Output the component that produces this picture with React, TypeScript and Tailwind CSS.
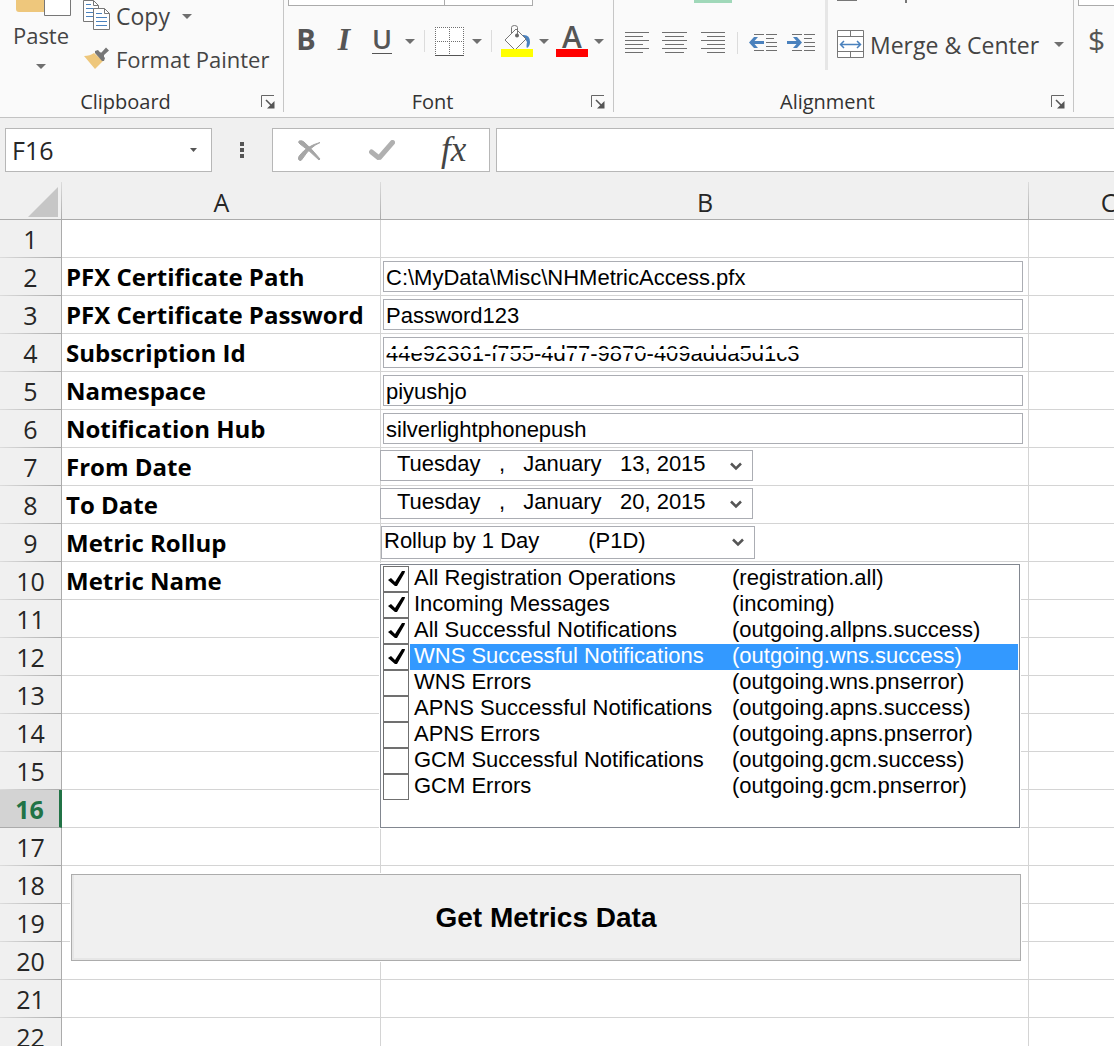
import { useState, type ReactNode } from "react";

const ui = "font-['Open_Sans',sans-serif]";
const form = "font-['Liberation_Sans',sans-serif]";

function Caret() {
  return (
    <svg width="10" height="5" viewBox="0 0 10 5" className="shrink-0" aria-hidden="true">
      <path d="M0 0h10L5 5z" fill="#6f6f6f" />
    </svg>
  );
}

function Launcher() {
  return (
    <button aria-label="More options" className="block">
      <svg width="14" height="14" viewBox="0 0 14 14" aria-hidden="true">
        <path d="M.5 12V.5H13" fill="none" stroke="#666" />
        <path d="M5 5l7 7" stroke="#555" strokeWidth="1.6" />
        <path d="M13.5 6v7.5H6z" fill="#555" />
      </svg>
    </button>
  );
}

function GroupFooter({ name }: { name: string }) {
  return (
    <div className="flex h-5 items-center pr-2">
      <span className="flex-1 pr-2.5 text-center text-[20px] leading-7 text-[#333]">{name}</span>
      <Launcher />
    </div>
  );
}

function Lines({ rows }: { rows: [number, number][] }) {
  return (
    <svg width="25" height="22" viewBox="0 0 25 22" aria-hidden="true">
      {rows.map(([a, b], i) => (
        <path key={i} d={`M${a} ${i * 4 + 0.5}H${b}`} stroke="#6f6f6f" />
      ))}
    </svg>
  );
}

function Indent({ out }: { out?: boolean }) {
  return (
    <svg width="28" height="18" viewBox="0 0 28 18" aria-hidden="true">
      <path d="M5 .5h10M17 .5h11M17 4.5h8M17 8.5h11M17 12.5h11M5 16.5h10M17 16.5h11" stroke="#6f6f6f" />
      <path
        d={out ? "M0 8.5L5 3h4L5.500 7H15v3H5.500L9 14H5z" : "M15 8.500L10 3H6l3.500 4H0v3h9.500L6 14h4z"}
        fill="#4a81bd"
      />
    </svg>
  );
}

function Ribbon() {
  return (
    <header className={`flex h-[118px] shrink-0 overflow-hidden border-b border-[#c3c3c3] bg-[#fafafa] text-[22px] text-[#444] ${ui}`}>
      <section className="mb-[5px] flex w-[284px] shrink-0 flex-col border-r border-[#c6c6c6]">
        <div className="flex flex-1">
          <button aria-label="Paste" className="flex w-[82px] flex-col items-center">
            <svg width="56" height="16" viewBox="0 0 56 16" className="ml-1" aria-hidden="true">
              <path d="M1 0h28v12H4q-3 0-3-3z" fill="#eec77c" />
              <path d="M29.500 0v15.500h26V0" fill="#fff" stroke="#777" />
            </svg>
            <span className="mt-[3px] leading-8">Paste</span>
            <span className="mt-[13px]"><Caret /></span>
          </button>
          <div className="flex flex-col">
            <button className="flex h-8 items-center">
              <svg width="28" height="30" viewBox="0 0 28 30" className="mr-1.5 -mt-0.5" aria-hidden="true">
                <path d="M1.500.5h10l5 5v16h-15z" fill="#fff" stroke="#777" />
                <path d="M11.500.5v5h5" fill="none" stroke="#777" />
                <path d="M4 4.500h5M4 8.500h8M4 12.500h8M4 16.500h8" stroke="#4a81bd" />
                <path d="M11.500 8.500h11l5 5v16h-16z" fill="#fff" stroke="#777" />
                <path d="M22.500 8.500v5h5" fill="none" stroke="#777" />
                <path d="M14 13.500h6M14 17.500h11M14 21.500h11M14 25.500h11" stroke="#4a81bd" />
              </svg>
              <span className="mr-3 text-[23px]">Copy</span>
              <Caret />
            </button>
            <button className="mt-[7px] flex h-10 items-center">
              <svg width="25" height="22" viewBox="0 0 25 22" className="ml-0.5 mr-[7px] -mt-0.5" aria-hidden="true">
                <path d="M0 9q6 0 10-3l9 8-8 8z" fill="#eec77c" />
                <path d="M11 4l3-1 7 8-1 3-2 0-7-8z" fill="#777" />
                <path d="M15 5.500l2.500 0L22 .5l3 3-5 4.500v3l-1 1z" fill="#777" />
              </svg>
              <span>Format Painter</span>
            </button>
          </div>
        </div>
        <GroupFooter name="Clipboard" />
      </section>

      <section className="mb-[5px] flex w-[330px] shrink-0 flex-col border-r border-[#c6c6c6]">
        <div className="ml-1 flex h-1.5 w-[245px] border border-t-0 border-[#ababab] bg-white">
          <div className="w-[156px] border-r border-[#ababab]" />
        </div>
        <div className="mt-[17px] flex h-9 items-center">
          <button className="ml-3 w-5 pb-1 text-center text-[29px] font-bold leading-8 text-[#555]">B</button>
          <button className="ml-4 w-6 pb-1 text-center font-['Liberation_Serif',serif] text-[32px] font-bold italic leading-8 text-[#555]">I</button>
          <button className="ml-4 w-5 pb-1 text-center text-[27px] font-semibold leading-7 text-[#555]">
            <span className="block border-b border-[#555]">U</span>
          </button>
          <span className="ml-[13px]"><Caret /></span>
          <i className="ml-[9px] h-[22px] w-px bg-[#dcdcdc]" />
          <button aria-label="Borders" className="ml-[10px]">
            <svg width="29" height="29" viewBox="0 0 29 29" aria-hidden="true">
              <path d="M0 0h29v29H0z" fill="#fff" />
              <path d="M0 .5h29M0 14.500h29M.5 0v29M14.500 0v29M28.500 0v29" stroke="#6f6f6f" strokeDasharray="1 1" />
              <path d="M0 28.500h29" stroke="#555" />
            </svg>
          </button>
          <span className="ml-2"><Caret /></span>
          <i className="ml-[9px] h-[22px] w-px bg-[#dcdcdc]" />
          <button aria-label="Fill color" className="ml-[9px]">
            <svg width="32" height="32" viewBox="0 0 32 32" aria-hidden="true">
              <path d="M21 10q8-1 8 7 0 4-3 6-1-1 0-6-2-4-5-7z" fill="#4a81bd" />
              <path d="M15 4l10 10-11 11L4 15z" fill="#fff" stroke="#777" />
              <path d="M10.500 9V2.500q0-2 3-2t3 2V10" fill="none" stroke="#777" />
              <circle cx="16" cy="10.500" r="2" fill="#666" />
              <path d="M0 24h32v8H0z" fill="#ff0" />
            </svg>
          </button>
          <span className="ml-1.5"><Caret /></span>
          <button aria-label="Font color" className="ml-[7px] flex w-8 flex-col items-center">
            <span className="-my-1 text-[30px] font-semibold leading-8 text-[#555]">A</span>
            <span className="relative h-2 w-8 bg-[#f00]" />
          </button>
          <span className="ml-1.5"><Caret /></span>
        </div>
        <div className="flex-1" />
        <GroupFooter name="Font" />
      </section>

      <section className="mb-[5px] flex w-[460px] shrink-0 flex-col border-r border-[#c6c6c6]">
        <div className="flex h-[70px]">
          <div className="flex w-[214px] flex-col border-r-[3px] border-[#e6e6e6]">
            <i className="ml-20 h-[3px] w-[38px] bg-[#a0d8b9]" />
            <div className="mt-[22px] flex h-9 items-center">
              <button aria-label="Align left" className="ml-[11px]">
                <Lines rows={[[0, 24], [0, 18], [0, 24], [0, 18], [0, 24], [0, 18]]} />
              </button>
              <button aria-label="Center" className="ml-3">
                <Lines rows={[[0, 25], [3, 22], [0, 25], [3, 22], [0, 25], [3, 22]]} />
              </button>
              <button aria-label="Align right" className="ml-[14px]">
                <Lines rows={[[0, 24], [6, 24], [0, 24], [6, 24], [0, 24], [6, 24]]} />
              </button>
              <i className="ml-[11px] h-[22px] w-px bg-[#dcdcdc]" />
              <button aria-label="Decrease indent" className="ml-[11px]"><Indent out /></button>
              <button aria-label="Increase indent" className="ml-[10px]"><Indent /></button>
            </div>
          </div>
          <div className="flex flex-1 flex-col">
            <div className="flex h-[3px] items-start">
              <i className="ml-[9px] h-px w-5 bg-[#777]" />
              <i className="ml-12 h-[3px] w-0.5 bg-[#777]" />
            </div>
            <button className="mt-[23px] flex h-9 items-center whitespace-nowrap pl-[9px]">
              <svg width="27" height="28" viewBox="0 0 27 28" className="mr-1.5 shrink-0" aria-hidden="true">
                <path d="M.5.5h26v27H.5zM.5 6.500h26M.5 21.500h26M13.500 0v6.500M13.500 21.500V28" fill="#fff" stroke="#777" />
                <path d="M4 14.500h19M7 11l-3.500 3.500L7 18M20 11l3.500 3.500L20 18" fill="none" stroke="#4a81bd" strokeWidth="1.500" />
              </svg>
              <span className="mr-[15px] pt-0.5 text-[23px]">Merge &amp; Center</span>
              <Caret />
            </button>
          </div>
        </div>
        <div className="flex-1" />
        <GroupFooter name="Alignment" />
      </section>

      <section className="min-w-0 flex-1">
        <div className="ml-1 h-1.5 border-b border-l border-[#ababab] bg-white" />
        <button className="ml-[14px] mt-4 block text-[30px] leading-9 text-[#555]">$</button>
      </section>
    </header>
  );
}

function FormulaBar() {
  return (
    <div className={`flex h-16 shrink-0 items-start bg-[#f0f0f0] pt-[10px] ${ui}`}>
      <div className="ml-[5px] flex h-11 w-[207px] shrink-0 items-center border border-[#b7b7b7] bg-white pr-[14px]">
        <input aria-label="Name Box" defaultValue="F16" className="h-full w-full min-w-0 flex-1 bg-transparent pl-1.5 text-[25px] text-[#262626] outline-none" />
        <svg width="7" height="4" viewBox="0 0 7 4" aria-hidden="true"><path d="M0 0h7L3.500 4z" fill="#555" /></svg>
      </div>
      <svg width="4" height="16" viewBox="0 0 4 16" className="ml-7 mt-[14px] shrink-0" aria-hidden="true">
        <path d="M0 0h4v4H0zM0 6h4v4H0zM0 12h4v4H0z" fill="#555" />
      </svg>
      <div className="ml-7 flex h-11 w-[218px] shrink-0 items-center border border-[#b7b7b7] bg-white">
        <button aria-label="Cancel" className="ml-[25px]">
          <svg width="23" height="21" viewBox="0 0 23 21" aria-hidden="true">
            <path d="M1 1q3-1 5 1 7 6 16 17l-1 1Q12 11 2 4 0 3 1 1z" fill="#a6a6a6" stroke="#a6a6a6" />
            <path d="M22 2.500Q12 7 5 18q-2 4-4 2t1-5Q9 6 22 2.500z" fill="#a6a6a6" stroke="#a6a6a6" />
          </svg>
        </button>
        <button aria-label="Enter" className="ml-12">
          <svg width="26" height="21" viewBox="0 0 26 21" aria-hidden="true">
            <path d="M2.500 12l7.500 6L23.500 2.500" fill="none" stroke="#b0b0b0" strokeWidth="5" strokeLinecap="round" strokeLinejoin="bevel" />
          </svg>
        </button>
        <button aria-label="Insert function" className="ml-[46px] font-['Liberation_Serif',serif] text-[35px] italic leading-9 text-[#444]">fx</button>
      </div>
      <input aria-label="Formula" className="ml-1.5 h-11 min-w-0 flex-1 border border-r-0 border-[#b7b7b7] bg-white px-2 text-[25px] outline-none" />
    </div>
  );
}

function Field({ id, value, struck }: { id: string; value: string; struck?: boolean }) {
  return (
    <div className="relative ml-0.5 mr-[5px] mt-[3px]">
      <input
        id={id}
        defaultValue={value}
        className={`block h-[31px] w-full border border-[#abadb3] bg-white pl-0.5 pt-0.5 text-[22px] leading-7 text-black outline-none ${form}`}
      />
      {struck && <span className="absolute left-0.5 top-3 h-1 w-[420px] bg-white" />}
    </div>
  );
}

function Dropdown({ id, value, kind }: { id: string; value: string; kind: "date" | "list" }) {
  return (
    <div className={kind === "date" ? "relative -ml-px mt-0.5 w-[373px]" : "relative mt-0.5 w-[374px]"}>
      <select
        id={id}
        className={`block w-full appearance-none border border-[#abadb3] bg-white text-[22px] leading-[26px] text-black outline-none ${form} ${
          kind === "date" ? "h-[31px] pb-[3px] pl-4" : "h-[33px] pb-1 pl-0.5"
        }`}
      >
        <option>{value}</option>
      </select>
      <svg width="12" height="9" viewBox="0 0 12 9" className="pointer-events-none absolute right-[11px] top-3" aria-hidden="true">
        <path d="M1 1.500l5 5 5-5" fill="none" stroke="#555" strokeWidth="2.500" />
      </svg>
    </div>
  );
}

const metrics: [string, string][] = [
  ["All Registration Operations", "(registration.all)"],
  ["Incoming Messages", "(incoming)"],
  ["All Successful Notifications", "(outgoing.allpns.success)"],
  ["WNS Successful Notifications", "(outgoing.wns.success)"],
  ["WNS Errors", "(outgoing.wns.pnserror)"],
  ["APNS Successful Notifications", "(outgoing.apns.success)"],
  ["APNS Errors", "(outgoing.apns.pnserror)"],
  ["GCM Successful Notifications", "(outgoing.gcm.success)"],
  ["GCM Errors", "(outgoing.gcm.pnserror)"],
];

function MetricList() {
  const [checked, setChecked] = useState([0, 1, 2, 3]);
  const toggle = (i: number) =>
    setChecked(checked.includes(i) ? checked.filter((c) => c !== i) : [...checked, i]);
  return (
    <div
      role="group"
      aria-label="Metric Name"
      className={`absolute -left-px top-0.5 z-10 h-[264px] w-[640px] border border-[#828790] bg-white py-px pl-0.5 pr-px text-[22px] text-black ring-1 ring-white ${form}`}
    >
      {metrics.map(([name, code], i) => (
        <label key={name} className="flex h-[26px] gap-px">
          <span className="relative block size-[26px] shrink-0">
            <input
              type="checkbox"
              checked={checked.includes(i)}
              onChange={() => toggle(i)}
              className="block size-[26px] appearance-none border border-[#707070] bg-white"
            />
            {checked.includes(i) && (
              <svg width="18" height="16" viewBox="0 0 18 16" className="pointer-events-none absolute left-[5px] top-[5px]" aria-hidden="true">
                <path d="M0 9l3-2 4 4L14 0h3l-.5 2L9 15H7z" fill="#000" />
              </svg>
            )}
          </span>
          <span className={i === 3 ? "flex flex-1 bg-[#3399ff] pl-1 leading-6 text-white" : "flex flex-1 pl-1 leading-6"}>
            <span className="w-[318px] whitespace-nowrap">{name}</span>
            <span>{code}</span>
          </span>
        </label>
      ))}
    </div>
  );
}

type Row = { id: string; label: string; control?: ReactNode };

const rows: Record<number, Row> = {
  2: { id: "path", label: "PFX Certificate Path", control: <Field id="path" value="C:\MyData\Misc\NHMetricAccess.pfx" /> },
  3: { id: "password", label: "PFX Certificate Password", control: <Field id="password" value="Password123" /> },
  4: { id: "subscription", label: "Subscription Id", control: <Field id="subscription" value="44e92361-f755-4d77-9870-409adda5d1c3" struck /> },
  5: { id: "namespace", label: "Namespace", control: <Field id="namespace" value="piyushjo" /> },
  6: { id: "hub", label: "Notification Hub", control: <Field id="hub" value="silverlightphonepush" /> },
  7: { id: "from", label: "From Date", control: <Dropdown id="from" kind="date" value={"Tuesday\u00a0\u00a0\u00a0,\u00a0\u00a0\u00a0January\u00a0\u00a0\u00a013, 2015"} /> },
  8: { id: "to", label: "To Date", control: <Dropdown id="to" kind="date" value={"Tuesday\u00a0\u00a0\u00a0,\u00a0\u00a0\u00a0January\u00a0\u00a0\u00a020, 2015"} /> },
  9: { id: "rollup", label: "Metric Rollup", control: <Dropdown id="rollup" kind="list" value={"Rollup by 1 Day\u00a0\u00a0\u00a0\u00a0\u00a0\u00a0\u00a0\u00a0(P1D)"} /> },
};

const colHead =
  "border-b border-[#ababab] bg-[linear-gradient(to_bottom,#dcdcdc,#ababab)] bg-[length:1px_100%] bg-right bg-no-repeat px-0 pb-0 pt-[3px] font-normal leading-8";
const cell = "relative border-b border-r border-[#d4d4d4] p-0 align-top";
const labelText = "block whitespace-nowrap pl-1 pt-[3px] text-[24px] font-bold leading-8 text-black";

function Sheet() {
  return (
    <main className="min-h-0 flex-1 overflow-hidden">
      <table className={`w-full min-w-[1188px] table-fixed border-separate border-spacing-0 ${ui}`}>
        <colgroup>
          <col className="w-[62px]" />
          <col className="w-[319px]" />
          <col className="w-[648px]" />
          <col />
        </colgroup>
        <thead>
          <tr className="h-[38px] bg-[#f0f0f0] text-[25px] text-[#262626]">
            <th className={colHead}>
              <svg width="30" height="30" viewBox="0 0 30 30" className="ml-7 block" role="img" aria-label="Select all">
                <path d="M30 0v30H0z" fill="#c6c6c6" />
              </svg>
            </th>
            <th scope="col" className={colHead}>A</th>
            <th scope="col" className={colHead}>B</th>
            <th scope="col" className={colHead}>C</th>
          </tr>
        </thead>
        <tbody>
          {Array.from({ length: 22 }, (_, i) => i + 1).map((n) => (
            <tr key={n} className="h-[38px]">
              <th
                scope="row"
                className={
                  n === 16
                    ? "border-b border-r-[3px] border-b-[#ababab] border-r-[#217346] bg-[#d3d3d3] p-0 text-[25px] font-bold leading-9 text-[#217346]"
                    : "border-r border-[#ababab] bg-[#f0f0f0] bg-[linear-gradient(to_right,#dcdcdc,#ababab)] bg-[length:100%_1px] bg-bottom bg-no-repeat p-0 text-[25px] font-normal leading-9 text-[#262626]"
                }
              >
                {n}
              </th>
              <td className={cell}>
                {rows[n] && (
                  <label htmlFor={rows[n].id} className={labelText}>
                    {rows[n].label}
                  </label>
                )}
                {n === 10 && <span className={labelText}>Metric Name</span>}
                {n === 18 && (
                  <button
                    className={`absolute left-[9px] top-2 z-10 h-[87px] w-[950px] border border-[#acacac] bg-[#f0f0f0] text-[28px] font-bold text-black shadow-[inset_2px_-2px_0_#e6e6e6] ring-1 ring-white ${form}`}
                  >
                    Get Metrics Data
                  </button>
                )}
              </td>
              <td className={cell}>
                {rows[n]?.control}
                {n === 10 && <MetricList />}
              </td>
              <td className={cell} />
            </tr>
          ))}
        </tbody>
      </table>
    </main>
  );
}

export default function App() {
  return (
    <div className="h-screen bg-white pr-1.5">
      <div className="flex h-full flex-col overflow-hidden">
        <Ribbon />
        <FormulaBar />
        <Sheet />
      </div>
    </div>
  );
}
